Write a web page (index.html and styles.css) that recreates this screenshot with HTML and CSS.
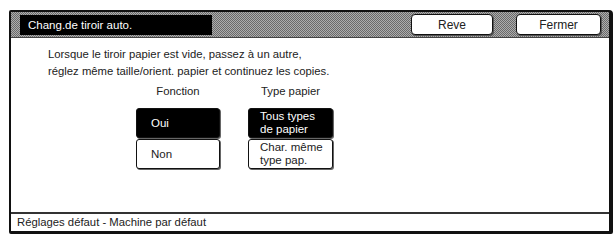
FILE: index.html
```html
<!DOCTYPE html>
<html lang="fr">
<head>
  <meta charset="UTF-8" />
  <title>Chang.de tiroir auto.</title>
  <link rel="stylesheet" href="styles.css">
</head>
<body>
  <div class="frame">
    <div class="topbar">
      <div class="title">Chang.de tiroir auto.</div>
      <div class="top-btns">
        <button class="key key-reve">Reve</button>
        <button class="key key-close">Fermer</button>
      </div>
    </div>

    <div class="content">
      <p class="intro">Lorsque le tiroir papier est vide, passez à un autre,<br>réglez même taille/orient. papier et continuez les copies.</p>

      <div class="options">
        <div class="group">
          <div class="label">Fonction</div>
          <button class="opt on">Oui</button>
          <button class="opt">Non</button>
        </div>
        <div class="group group-paper">
          <div class="label">Type papier</div>
          <button class="opt on two">Tous types<br>de papier</button>
          <button class="opt two">Char. même<br>type pap.</button>
        </div>
      </div>
    </div>

    <div class="status">Réglages défaut - Machine par défaut</div>
  </div>
</body>
</html>
```

FILE: styles.css
```css
body {
  margin: 0;
  background: #fff;
  font-family: 'Liberation Sans', Arial, sans-serif;
  color: #222;
}

.frame {
  margin: 10px 0 0 9px;
  width: 598px;
  height: 219px;
  border: 2px solid #111;
  border-right-width: 4px;
  border-bottom-width: 3px;
  border-radius: 2px 4px 2px 2px;
  display: flex;
  flex-direction: column;
  background: #fff;
}

.topbar {
  height: 25px;
  display: flex;
  align-items: center;
  justify-content: space-between;
  padding: 0 8px 0 9px;
  border-bottom: 1px solid #444;
  background-color: #8c8c8c;
  background-image: repeating-conic-gradient(#6a6a6a 0 25%, #adadad 0 50%);
  background-size: 2px 2px;
}

.title {
  width: 184px;
  height: 20px;
  line-height: 20px;
  padding-left: 8px;
  background: #000;
  color: #fff;
  font-size: 11.5px;
}

.top-btns {
  display: flex;
  gap: 23px;
}

.key {
  height: 21px;
  background: #fff;
  border: 1px solid #111;
  border-radius: 4px;
  box-shadow: 1px 1px 0 #555;
  font-family: inherit;
  font-size: 12px;
  color: #222;
  padding: 0;
}

.key-reve { width: 82px; }
.key-close { width: 85px; }

.content {
  flex: 1;
  padding-top: 8px;
}

.intro {
  margin: 0 0 0 37px;
  font-size: 11.3px;
  line-height: 17px;
}

.options {
  display: flex;
  gap: 28px;
  margin: 5px 0 0 125px;
}

.group {
  width: 84px;
  display: flex;
  flex-direction: column;
}

.group-paper {
  width: 85px;
}

.label {
  text-align: center;
  font-size: 11.3px;
  height: 17px;
  margin-bottom: 6px;
}

.opt {
  height: 30px;
  margin-bottom: 1px;
  text-align: left;
  padding: 0 0 0 14px;
  background: #fff;
  border: 1px solid #111;
  border-radius: 3px;
  box-shadow: 1px 1px 0 #666;
  font-family: inherit;
  font-size: 11.5px;
  color: #222;
}

.opt.on {
  background: #000;
  color: #fff;
}

.opt.two {
  padding-left: 11px;
  line-height: 13px;
}

.status {
  height: 17px;
  line-height: 17px;
  border-top: 2px solid #333;
  padding-left: 6px;
  font-size: 11.3px;
}
```
